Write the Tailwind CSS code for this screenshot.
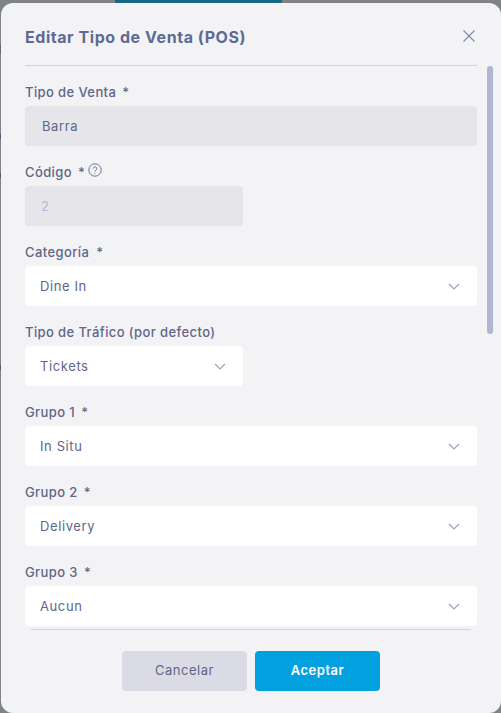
<!DOCTYPE html>
<html lang="es">
<head>
<meta charset="UTF-8">
<title>Editar Tipo de Venta (POS)</title>
<script src="https://cdn.jsdelivr.net/npm/@tailwindcss/browser@4"></script>
</head>
<body class="bg-[#7f8383] font-['Inter','Noto_Sans',sans-serif] text-[#5f6688] overflow-hidden">
<div class="relative w-[501px] h-[713px] overflow-hidden">
  <!-- bits of the page behind the modal -->
  <div class="absolute left-0 top-[45px] w-[1px] h-[9px] bg-[#666b6e]"></div>
  <div class="absolute left-0 top-[134px] w-[1px] h-[5px] bg-[#565a78]"></div>
  <div class="absolute left-0 top-[173px] w-[1px] h-[5px] bg-[#565a78]"></div>
  <div class="absolute left-0 top-[365px] w-[1px] h-[5px] bg-[#565a78]"></div>
  <div class="absolute left-[115px] top-0 w-[167px] h-[4px] bg-[#1a6784] rounded-b-[3px]"></div>
  <div class="absolute left-[1px] top-[3px] w-[500px] h-[710px] bg-[#f3f3f6] rounded-[12px] flex flex-col">
    <div class="relative mx-[24px] h-[63px] shrink-0 border-b border-[#d3d3de] flex items-center justify-between">
      <h1 class="text-[16px] font-bold tracking-[0.55px] text-[#5f6a92] mt-[5px]">Editar Tipo de Venta (POS)</h1>
      <svg class="w-[14px] h-[14px] mr-[1px] mt-[3px]" viewBox="0 0 14 14" fill="none" stroke="#8088b0" stroke-width="1.2"><path d="M1.5 1.5l11 11M12.5 1.5l-11 11"/></svg>
    </div>
    <div class="relative flex-1 min-h-0 overflow-hidden">
      <div class="absolute left-[486px] top-0 w-[6px] h-[268px] bg-[#b0b5d0] rounded-[3px]"></div>
      <div class="pl-[24px] w-[476px] pt-[14px] flex flex-col gap-[14px] text-[13px] tracking-[0.4px]">
        <div>
          <div class="h-[26px] font-medium leading-[24px]">Tipo de Venta<span class="ml-[6px]">*</span></div>
          <div class="h-[40px] rounded-[4px] bg-[#e5e5ea] pl-[17px] pt-[1px] flex items-center tracking-[0.6px]">Barra</div>
        </div>
        <div>
          <div class="h-[26px] font-medium leading-[24px] flex items-center pb-[2px]">Código<span class="ml-[6px]">*</span>
            <svg class="w-[14px] h-[14px] ml-[3px] mb-[4px]" viewBox="0 0 14 14" fill="none" stroke="#5f6688" stroke-width="0.9"><circle cx="7" cy="7" r="6.2"/><path d="M5.2 5.6a1.8 1.8 0 1 1 2.8 1.5c-.7.4-1 .8-1 1.4"/><path d="M7 9.8v.9"/></svg>
          </div>
          <div class="w-[218px] h-[40px] rounded-[4px] bg-[#e5e5ea] pl-[16px] pt-[1px] flex items-center text-[#b4b8d2]">2</div>
        </div>
        <div>
          <div class="h-[26px] font-medium leading-[24px]">Categoría<span class="ml-[7px]">*</span></div>
          <div class="h-[40px] rounded-[4px] bg-white pl-[15px] pr-[17px] pt-[1px] flex items-center justify-between tracking-[0.6px]">Dine In
            <svg class="w-[12px] h-[7px]" viewBox="0 0 12 7" fill="none" stroke="#9aa0c0" stroke-width="1.2"><path d="M1 1l5 5 5-5"/></svg>
          </div>
        </div>
        <div>
          <div class="h-[26px] font-medium leading-[24px]">Tipo de Tráfico (por defecto)</div>
          <div class="w-[218px] h-[40px] rounded-[4px] bg-white pl-[15px] pr-[17px] pt-[1px] flex items-center justify-between tracking-[0.6px]">Tickets
            <svg class="w-[12px] h-[7px]" viewBox="0 0 12 7" fill="none" stroke="#9aa0c0" stroke-width="1.2"><path d="M1 1l5 5 5-5"/></svg>
          </div>
        </div>
        <div>
          <div class="h-[26px] font-medium leading-[24px]">Grupo 1<span class="ml-[6px]">*</span></div>
          <div class="h-[40px] rounded-[4px] bg-white pl-[15px] pr-[17px] pt-[1px] flex items-center justify-between tracking-[0.6px]">In Situ
            <svg class="w-[12px] h-[7px]" viewBox="0 0 12 7" fill="none" stroke="#9aa0c0" stroke-width="1.2"><path d="M1 1l5 5 5-5"/></svg>
          </div>
        </div>
        <div>
          <div class="h-[26px] font-medium leading-[24px]">Grupo 2<span class="ml-[6px]">*</span></div>
          <div class="h-[40px] rounded-[4px] bg-white pl-[15px] pr-[17px] pt-[1px] flex items-center justify-between tracking-[0.6px]">Delivery
            <svg class="w-[12px] h-[7px]" viewBox="0 0 12 7" fill="none" stroke="#9aa0c0" stroke-width="1.2"><path d="M1 1l5 5 5-5"/></svg>
          </div>
        </div>
        <div>
          <div class="h-[26px] font-medium leading-[24px]">Grupo 3<span class="ml-[6px]">*</span></div>
          <div class="h-[40px] rounded-[4px] bg-white pl-[15px] pr-[17px] pt-[1px] flex items-center justify-between tracking-[0.6px]">Aucun
            <svg class="w-[12px] h-[7px]" viewBox="0 0 12 7" fill="none" stroke="#9aa0c0" stroke-width="1.2"><path d="M1 1l5 5 5-5"/></svg>
          </div>
        </div>
      </div>
    </div>
    <div class="shrink-0 h-[84px] mx-[30px] border-t border-[#d3d3de] pt-[21px] flex justify-center gap-[8px] text-[13px] tracking-[0.5px]">
      <button class="w-[125px] h-[40px] rounded-[4px] bg-[#dbdbe6]">Cancelar</button>
      <button class="w-[125px] h-[40px] rounded-[4px] bg-[#00a1de] font-semibold text-white">Aceptar</button>
    </div>
  </div>
</div>
</body>
</html>
